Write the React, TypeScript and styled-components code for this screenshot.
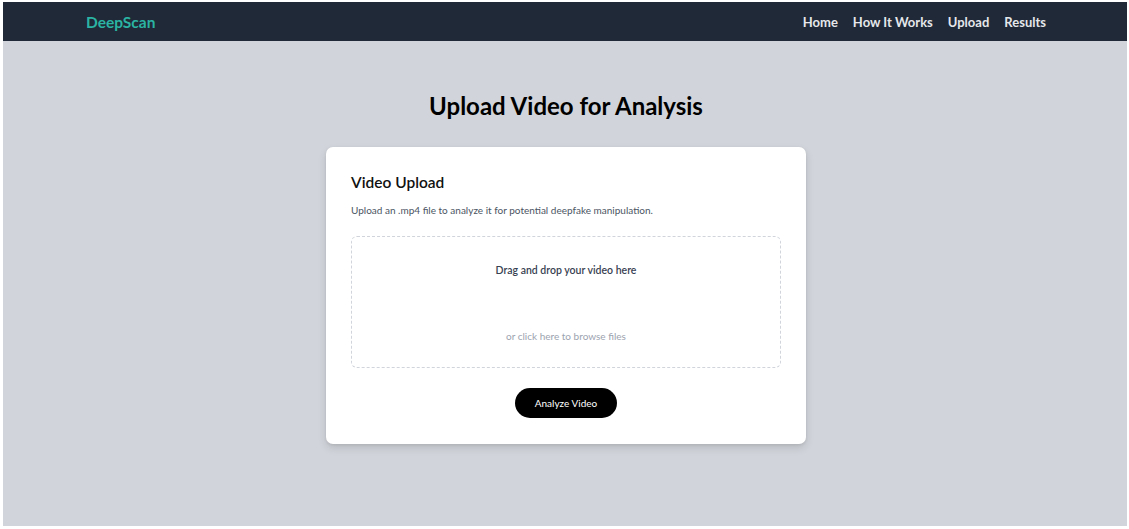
import React from "react";
import styled, { createGlobalStyle } from "styled-components";

const GlobalStyle = createGlobalStyle`
  html, body {
    margin: 0;
    padding: 0;
    background: #ffffff;
  }
  body {
    font-family: Lato, "Open Sans", sans-serif;
    -webkit-font-smoothing: antialiased;
  }
  * { box-sizing: border-box; }
`;

const Frame = styled.div`
  margin: 2px 2px 3px 3px;
  height: 524px;
  background: #d1d5db;
  display: flex;
  flex-direction: column;
`;

const NavBar = styled.nav`
  height: 39px;
  background: #1f2937;
  display: flex;
  justify-content: center;
  flex-shrink: 0;
`;

const NavInner = styled.div`
  width: 962px;
  padding-left: 2px;
  display: flex;
  align-items: center;
  justify-content: space-between;
`;

const Logo = styled.div`
  color: #2bb3a3;
  font-size: 15.5px;
  font-weight: 700;
`;

const NavLinks = styled.div`
  display: flex;
  gap: 15px;
`;

const NavLink = styled.a`
  color: #e5e7eb;
  font-size: 13px;
  font-weight: 700;
  text-decoration: none;
`;

const Main = styled.main`
  display: flex;
  flex-direction: column;
  align-items: center;
  padding: 49px 0 0 2px;
`;

const PageTitle = styled.h1`
  margin: 0 0 25px;
  font-size: 24px;
  font-weight: 700;
  color: #000;
  line-height: 32px;
`;

const Card = styled.section`
  width: 480px;
  background: #ffffff;
  border-radius: 7px;
  box-shadow: 0 4px 8px rgba(0, 0, 0, 0.12), 0 1px 3px rgba(0, 0, 0, 0.08);
  padding: 24px 25px 26px;
  display: flex;
  flex-direction: column;
`;

const CardTitle = styled.h2`
  margin: 0;
  font-size: 15.5px;
  font-weight: 600;
  color: #111;
  line-height: 22px;
`;

const CardDesc = styled.p`
  margin: 9px 0 18px;
  font-size: 10px;
  color: #4b5563;
  line-height: 16px;
`;

const DropZone = styled.div`
  height: 132px;
  border: 1px dashed #d1d5db;
  border-radius: 6px;
  display: flex;
  flex-direction: column;
  align-items: center;
  justify-content: space-between;
  padding: 25px 0 23px;
  cursor: pointer;
`;

const DropText = styled.div<{ $muted?: boolean }>`
  font-size: ${(p) => (p.$muted ? "10px" : "10.5px")};
  font-weight: ${(p) => (p.$muted ? 400 : 600)};
  color: ${(p) => (p.$muted ? "#9ca3af" : "#374151")};
  line-height: 16px;
`;

const ButtonRow = styled.div`
  display: flex;
  justify-content: center;
  margin-top: 20px;
`;

const AnalyzeButton = styled.button`
  width: 102px;
  height: 30px;
  border: none;
  border-radius: 999px;
  background: #000;
  color: #fff;
  font-family: inherit;
  font-size: 10px;
  cursor: pointer;
`;

export default function App() {
  return (
    <>
      <GlobalStyle />
      <Frame>
        <NavBar>
          <NavInner>
            <Logo>DeepScan</Logo>
            <NavLinks>
              <NavLink href="#">Home</NavLink>
              <NavLink href="#">How It Works</NavLink>
              <NavLink href="#">Upload</NavLink>
              <NavLink href="#">Results</NavLink>
            </NavLinks>
          </NavInner>
        </NavBar>
        <Main>
          <PageTitle>Upload Video for Analysis</PageTitle>
          <Card>
            <CardTitle>Video Upload</CardTitle>
            <CardDesc>Upload an .mp4 file to analyze it for potential deepfake manipulation.</CardDesc>
            <DropZone>
              <DropText>Drag and drop your video here</DropText>
              <DropText $muted>or click here to browse files</DropText>
            </DropZone>
            <ButtonRow>
              <AnalyzeButton>Analyze Video</AnalyzeButton>
            </ButtonRow>
          </Card>
        </Main>
      </Frame>
    </>
  );
}
